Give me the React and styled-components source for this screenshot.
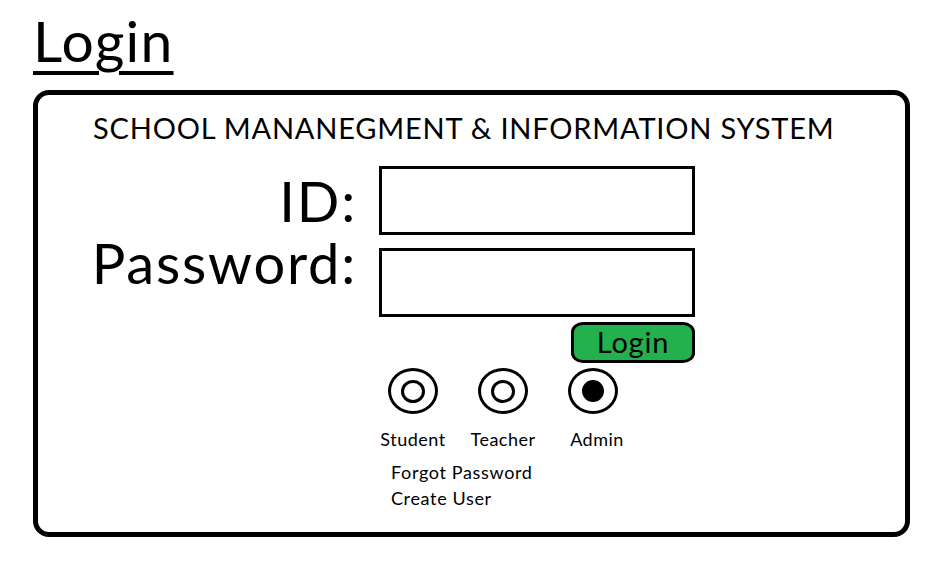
import React from "react";
import styled, { createGlobalStyle } from "styled-components";

const Global = createGlobalStyle`
  html, body { margin: 0; padding: 0; background: #fff; }
  body { font-family: Lato, "Open Sans", sans-serif; color: #000; }
`;

const Page = styled.div`
  width: 948px;
  height: 573px;
  padding: 12px 0 0 33px;
  box-sizing: border-box;
`;

const Title = styled.h1`
  margin: 0 0 22px 0;
  font-size: 57px;
  line-height: 56px;
  font-weight: 400;
  letter-spacing: 1.2px;
  text-decoration: underline;
  text-decoration-thickness: 4px;
  text-underline-offset: 9px;
`;

const Card = styled.div`
  width: 877px;
  height: 447px;
  box-sizing: border-box;
  border: 5px solid #000;
  border-radius: 16px;
  padding: 18px 0 0 0;
  display: flex;
  flex-direction: column;
`;

const Heading = styled.h2`
  margin: 0 0 24px 55px;
  font-size: 29px;
  line-height: 29px;
  font-weight: 400;
  letter-spacing: 0.8px;
  white-space: nowrap;
`;

const Form = styled.div`
  display: flex;
  gap: 22px;
`;

const LabelStack = styled.div`
  width: 319px;
  padding-top: 4px;
  display: flex;
  flex-direction: column;
  align-items: flex-end;
`;

const FieldLabel = styled.label`
  font-size: 56px;
  line-height: 62px;
  letter-spacing: 1.8px;
  white-space: nowrap;
`;

const FieldStack = styled.div`
  display: flex;
  flex-direction: column;
  align-items: flex-end;
  gap: 13px;
`;

const Input = styled.input`
  width: 316px;
  height: 69px;
  box-sizing: border-box;
  border: 3px solid #000;
  border-radius: 0;
  outline: none;
  font-size: 24px;
  padding: 0 10px;
  font-family: inherit;
`;

const LoginButton = styled.button`
  margin-top: -8px;
  width: 124px;
  height: 41px;
  box-sizing: border-box;
  background: #22b14c;
  border: 3px solid #000;
  border-radius: 12px / 10px;
  font-family: inherit;
  font-size: 29px;
  letter-spacing: 0.8px;
  line-height: 1;
  padding: 0 0 2px 0;
  color: #000;
  cursor: pointer;
`;

const RadioRow = styled.div`
  display: flex;
  margin: 5px 0 0 330px;
`;

const RadioItem = styled.label`
  width: 90px;
  display: flex;
  flex-direction: column;
  align-items: center;
  cursor: pointer;
`;

const RadioOuter = styled.span`
  width: 50px;
  height: 46px;
  box-sizing: border-box;
  border: 3px solid #000;
  border-radius: 50%;
  display: flex;
  align-items: center;
  justify-content: center;
`;

const RadioInner = styled.span`
  width: ${(p) => (p.$checked ? 22 : 24)}px;
  height: ${(p) => (p.$checked ? 22 : 23)}px;
  box-sizing: border-box;
  border-radius: 50%;
  border: 3px solid #000;
  background: ${(p) => (p.$checked ? "#000" : "#fff")};
`;

const RadioLabel = styled.span`
  margin-top: 15px;
  font-size: 18px;
  line-height: 20px;
  letter-spacing: 0.5px;
  padding-left: ${(p) => p.$shift || 0}px;
`;

const Links = styled.div`
  margin: 10px 0 0 353px;
  display: flex;
  flex-direction: column;
`;

const LinkText = styled.a`
  font-size: 18px;
  line-height: 26px;
  letter-spacing: 0.65px;
  color: #000;
  text-decoration: none;
  cursor: pointer;
`;

const roles = [
  { name: "Student", checked: false, shift: 0 },
  { name: "Teacher", checked: false, shift: 0 },
  { name: "Admin", checked: true, shift: 8 },
];

export default function App() {
  return (
    <>
      <Global />
      <Page>
        <Title>Login</Title>
        <Card>
          <Heading>SCHOOL MANANEGMENT &amp; INFORMATION SYSTEM</Heading>
          <Form>
            <LabelStack>
              <FieldLabel htmlFor="id">ID:</FieldLabel>
              <FieldLabel htmlFor="pw">Password:</FieldLabel>
            </LabelStack>
            <FieldStack>
              <Input id="id" />
              <Input id="pw" type="password" />
              <LoginButton>Login</LoginButton>
            </FieldStack>
          </Form>
          <RadioRow>
            {roles.map((r) => (
              <RadioItem key={r.name}>
                <RadioOuter>
                  <RadioInner $checked={r.checked} />
                </RadioOuter>
                <RadioLabel $shift={r.shift}>{r.name}</RadioLabel>
              </RadioItem>
            ))}
          </RadioRow>
          <Links>
            <LinkText>Forgot Password</LinkText>
            <LinkText>Create User</LinkText>
          </Links>
        </Card>
      </Page>
    </>
  );
}
